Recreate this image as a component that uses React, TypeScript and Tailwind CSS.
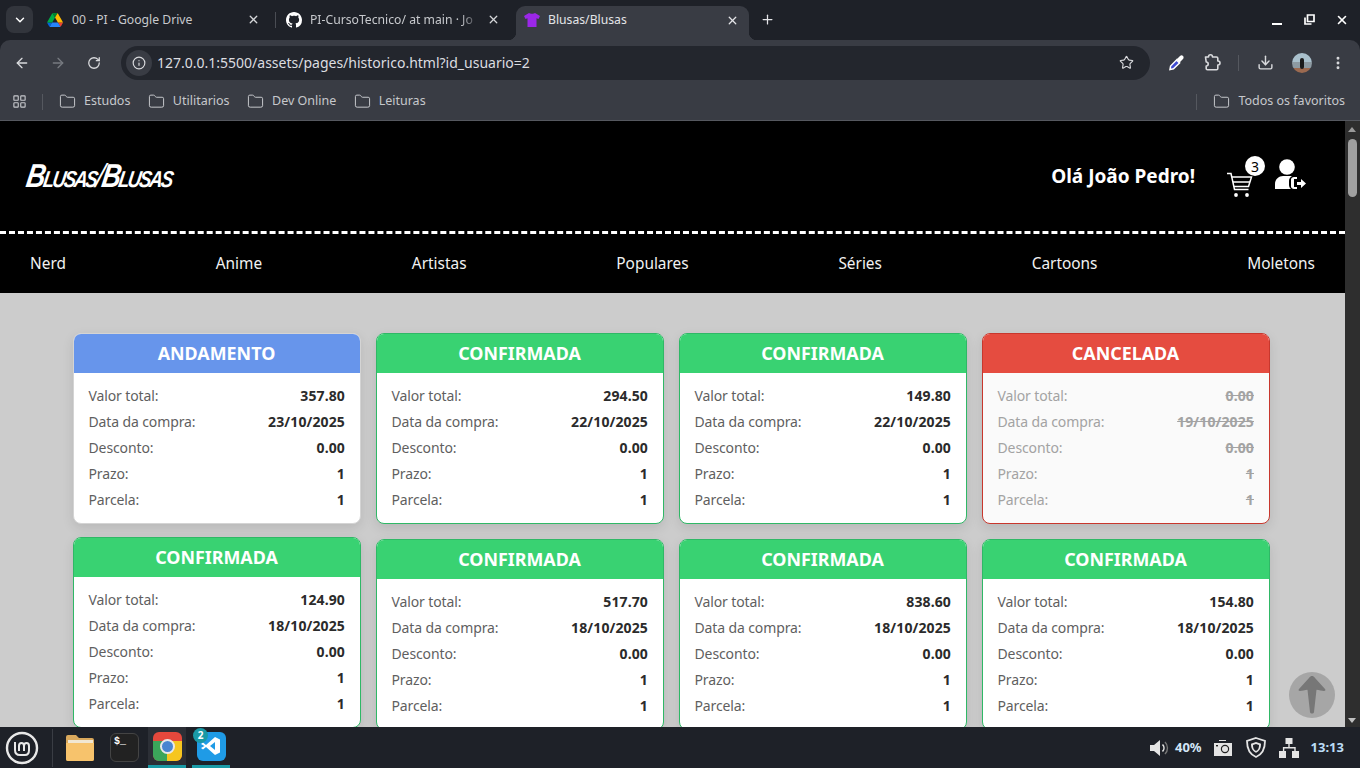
import React from "react";
import { ChevronDown, X, ArrowLeft, ArrowRight, RotateCw, Info, Star, Download, EllipsisVertical, Plus, LayoutGrid, Folder } from "lucide-react";

const font = "font-['Noto_Sans','Open_Sans',sans-serif]";

type Order = { s: "a" | "c" | "x"; v: string; d: string; off?: boolean };
const rows: Order[][] = [
  [
    { s: "a", v: "357.80", d: "23/10/2025" },
    { s: "c", v: "294.50", d: "22/10/2025" },
    { s: "c", v: "149.80", d: "22/10/2025" },
    { s: "x", v: "0.00", d: "19/10/2025" },
  ],
  [
    { s: "c", v: "124.90", d: "18/10/2025", off: true },
    { s: "c", v: "517.70", d: "18/10/2025" },
    { s: "c", v: "838.60", d: "18/10/2025" },
    { s: "c", v: "154.80", d: "18/10/2025" },
  ],
];

function Row({ l, v, x }: { l: string; v: string; x: boolean }) {
  return (
    <div className="flex justify-between h-[26px] items-center">
      <span className={`tracking-[-0.12px] ${x ? "text-[#a3a3a3]" : "text-[#5f5f5f]"}`}>{l}</span>
      <span className={`tracking-[0.12px] ${x ? "font-bold text-[#a3a3a3] line-through" : "font-bold text-[#2b2b2b]"}`}>{v}</span>
    </div>
  );
}

function Card({ o }: { o: Order }) {
  const x = o.s === "x";
  const border = o.s === "a" ? "border-[#d4d4d4]" : x ? "border-[#c8372d]" : "border-[#2fb866]";
  const head = o.s === "a" ? "bg-[#6795eb]" : x ? "bg-[#e54c40]" : "bg-[#39d272]";
  const label = o.s === "a" ? "ANDAMENTO" : x ? "CANCELADA" : "CONFIRMADA";
  return (
    <div className={`h-[191px] overflow-hidden rounded-[8px] border ${border} ${x ? "bg-[#fafafa]" : "bg-white"} shadow-[0_4px_12px_rgba(0,0,0,0.1)] ${o.off ? "-translate-y-[2px]" : ""}`}>
      <div className={`${head} h-[39px] flex items-center justify-center text-white font-bold text-[17.9px] pr-[1px]`}>{label}</div>
      <div className="pl-[14.5px] pr-[15px] pt-[9px] text-[14px]">
        <Row l="Valor total:" v={o.v} x={x} />
        <Row l="Data da compra:" v={o.d} x={x} />
        <Row l="Desconto:" v="0.00" x={x} />
        <Row l="Prazo:" v="1" x={x} />
        <Row l="Parcela:" v="1" x={x} />
      </div>
    </div>
  );
}

function Bm({ t }: { t: string }) {
  return (
    <div className="flex items-center gap-[8px] text-[12.5px] text-[#c6c8cc]">
      <Folder size={17} strokeWidth={1.4} />
      <span>{t}</span>
    </div>
  );
}

function Chrome() {
  return (
    <div className="bg-[#1e2128] shrink-0">
      <div className="h-[40px] flex items-center relative">
        <div className="ml-[6px] w-[27px] h-[27px] mt-[-1px] rounded-[8px] bg-[#32353c] flex items-center justify-center text-white"><ChevronDown size={14} strokeWidth={2.5} /></div>
        <div className="ml-[14px] flex items-center text-[12.2px] text-[#c7c9cd]">
          <svg width="16" height="14" viewBox="0 0 87 78"><path d="M6.6 66.9l3.9 6.7c.8 1.4 2 2.5 3.3 3.3L28 53H0c0 1.6.4 3.1 1.2 4.5z" fill="#0066da"/><path d="M43.7 25L30 1.2c-1.4.8-2.5 1.9-3.3 3.3L1.2 48.5C.4 49.9 0 51.4 0 53h28z" fill="#00ac47"/><path d="M73.6 76.9c1.3-.8 2.5-1.9 3.3-3.3l1.6-2.8 7.7-13.3c.8-1.4 1.2-2.9 1.2-4.5H59.8l5.9 11.7z" fill="#ea4335"/><path d="M43.7 25L57.4 1.2C56 .4 54.5 0 52.9 0H34.5c-1.6 0-3.1.5-4.5 1.2z" fill="#00832d"/><path d="M59.8 53H27.6L13.8 76.9c1.4.8 2.9 1.1 4.500 1.1h50.9c1.6 0 3.1-.5 4.5-1.2z" fill="#2684fc"/><path d="M73.4 26.5L60.7 4.5c-.8-1.4-2-2.5-3.3-3.3L43.7 25l16.1 28h27.5c0-1.6-.4-3.1-1.2-4.5z" fill="#ffba00"/></svg>
          <span className="ml-[9px] w-[175px]">00 - PI - Google Drive</span>
          <X size={13} strokeWidth={2.4} className="text-[#d5d6d9]" />
        </div>
        <div className="w-px h-[16px] bg-[#4a4d54] ml-[15px]" />
        <div className="ml-[10px] flex items-center text-[12.2px] text-[#c7c9cd]">
          <svg width="16" height="16" viewBox="0 0 16 16" fill="#fff"><path d="M8 0C3.58 0 0 3.58 0 8c0 3.54 2.29 6.53 5.47 7.59.4.07.55-.17.55-.38 0-.19-.01-.82-.01-1.49-2.01.37-2.53-.49-2.69-.94-.09-.23-.48-.94-.82-1.13-.28-.15-.68-.52-.01-.53.63-.01 1.08.58 1.23.82.72 1.21 1.87.87 2.33.66.07-.52.28-.87.51-1.07-1.78-.2-3.64-.89-3.64-3.95 0-.87.31-1.59.82-2.15-.08-.2-.36-1.02.08-2.12 0 0 .67-.21 2.2.82.64-.18 1.32-.27 2-.27s1.36.09 2 .27c1.53-1.04 2.2-.82 2.2-.82.44 1.1.16 1.92.08 2.12.51.56.82 1.27.82 2.15 0 3.07-1.87 3.75-3.65 3.95.29.25.54.73.54 1.48 0 1.07-.01 1.93-.01 2.2 0 .21.15.46.55.38A8.01 8.01 0 0016 8c0-4.42-3.58-8-8-8z"/></svg>
          <span className="ml-[8px] w-[177px] whitespace-nowrap [mask-image:linear-gradient(to_right,black_85%,transparent_96%)]">PI-CursoTecnico/ at main · Jo</span>
          <X size={13} strokeWidth={2.4} className="text-[#d5d6d9]" />
        </div>
        <div className="absolute left-[516px] top-[6px] w-[233px] h-[34px] rounded-t-[9px] bg-[#393c44] flex items-center pl-[8px] pb-[6px] text-[12.2px] text-[#e4e5e8]">
          <div className="absolute left-[-8px] bottom-0 w-[8px] h-[8px] bg-[radial-gradient(circle_at_0_0,transparent_8px,#393c44_8.5px)]" />
          <div className="absolute right-[-8px] bottom-0 w-[8px] h-[8px] bg-[radial-gradient(circle_at_100%_0,transparent_8px,#393c44_8.5px)]" />
          <svg width="16" height="16" viewBox="0 0 16 16" fill="#9b27e8"><path d="M5 1c1 1 5 1 6 0l5 3-1.500 3-2-.8V15H3.500V6.200l-2 .8L0 4z"/></svg>
          <span className="ml-[8px] w-[178px]">Blusas/Blusas</span>
          <X size={13} strokeWidth={2.4} className="text-[#e4e5e8]" />
        </div>
        <Plus size={15} strokeWidth={2} className="absolute left-[760px] top-[12px] text-[#e4e5e8]" />
        <div className="ml-auto mr-[11px] flex items-center text-white">
          <div className="w-[10px] h-[2px] bg-white mt-[8px]" />
          <svg className="ml-[22px] mt-[-2px]" width="11" height="11" viewBox="0 0 11 11" fill="none" stroke="#fff" strokeWidth="1.7"><path d="M3.500 1h6.500v6.500H3.500z"/><path d="M1 3.500v6.500h6.500" /></svg>
          <X size={14} strokeWidth={2.8} className="ml-[20px]" />
        </div>
      </div>
      <div className="bg-[#393c44] rounded-t-[10px] h-[45px] flex items-center text-[#d9dadd]">
        <ArrowLeft size={16} strokeWidth={2} className="ml-[14px]" />
        <ArrowRight size={16} strokeWidth={2} className="ml-[20px] text-[#777a80]" />
        <RotateCw size={14} strokeWidth={2.2} className="ml-[21px]" />
        <div className="ml-[20px] w-[1029px] h-[34px] rounded-full bg-[#23262d] flex items-center pl-[5px]">
          <div className="w-[26px] h-[26px] rounded-full bg-[#393c44] flex items-center justify-center"><Info size={14} strokeWidth={2} /></div>
          <span className="ml-[5px] text-[14px] text-[#dcdde0]">127.0.0.1:5500/assets/pages/historico.html?id_usuario=2</span>
          <Star size={15} strokeWidth={1.8} className="ml-auto mr-[16px]" />
        </div>
        <svg className="ml-[18px]" width="17" height="17" viewBox="0 0 17 17"><path d="M2 15.500l.6-3.500L8.500 6l3 3-6 5.800z" fill="#3f4bd1" stroke="#fff" strokeWidth="1.5"/><path d="M8 5l1.500-.5L12 2c1-1 2.300-.8 3-.1s.9 2 0 3l-2.500 2.500-.5 1.500z" fill="#fff"/></svg>
        <svg className="ml-[19px]" width="17" height="17" viewBox="0 0 17 17" fill="none" stroke="#d9dadd" strokeWidth="1.600" strokeLinejoin="round"><path d="M1.500 3h3c0-1.500 1-2.200 2-2.200S8.500 1.500 8.500 3h4c.8 0 1.300.5 1.300 1.300V7c1.500 0 2.200 1 2.200 2s-.7 2-2.200 2v3.500c0 .8-.5 1.300-1.300 1.300h-9c-.8 0-1.300-.5-1.300-1.300V12c1.500 0 2-1 2-2s-.5-2-2-2z"/></svg>
        <div className="w-px h-[16px] bg-[#55585f] ml-[17px]" />
        <Download size={17} strokeWidth={2} className="ml-[18px]" />
        <div className="ml-[18px] w-[20px] h-[20px] rounded-full overflow-hidden flex flex-col relative">
          <div className="h-[9px] bg-[#a9c0cc]" /><div className="h-[6px] bg-[#8d9aa2]" /><div className="h-[5px] bg-[#9c6a50]" />
          <div className="absolute left-[8px] top-[5px] w-[4px] h-[11px] rounded-sm bg-[#1b1b1b]" />
        </div>
        <EllipsisVertical size={16} strokeWidth={2.4} className="ml-[18px]" />
      </div>
      <div className="bg-[#393c44] h-[36px] flex items-center pb-[2px] border-b border-[#55585f]">
        <LayoutGrid size={15} strokeWidth={1.8} className="ml-[12px] text-[#c6c8cc]" />
        <div className="w-px h-[16px] bg-[#55585f] ml-[15px] mr-[16px]" />
        <div className="flex items-center gap-[17.4px]">
          <Bm t="Estudos" /><Bm t="Utilitarios" /><Bm t="Dev Online" /><Bm t="Leituras" />
        </div>
        <div className="ml-auto w-px h-[16px] bg-[#55585f] mr-[16px]" />
        <div className="mr-[15px]"><Bm t="Todos os favoritos" /></div>
      </div>
    </div>
  );
}

function Taskbar() {
  return (
    <div className="h-[41px] shrink-0 bg-[#1e2128] flex items-center relative">
      <svg className="ml-[5px]" width="34" height="34" viewBox="0 0 34 34" fill="none" stroke="#e8e8e8"><circle cx="17" cy="17" r="15" strokeWidth="2.4"/><path d="M10 11v8c0 3 2 5 5 5h5c3 0 4-2 4-5v-4c0-2-1-3-2.500-3S19 13 19 15v5M19 15c0-2-1-3-2.500-3S14 13 14 15v5" strokeWidth="2"/></svg>
      <div className="w-px h-[38px] bg-[#3a3d44] ml-[13px]" />
      <svg className="ml-[12px]" width="30" height="26" viewBox="0 0 30 26"><path d="M1 2a2 2 0 012-2h8l3 3h13a2 2 0 012 2v19a2 2 0 01-2 2H3a2 2 0 01-2-2z" fill="#d9a85c"/><rect x="3" y="5" width="25" height="3" fill="#f1e7d2"/><path d="M1 8h28v16a2 2 0 01-2 2H3a2 2 0 01-2-2z" fill="#f7c36c"/></svg>
      <div className="ml-[15px] w-[29px] h-[29px] rounded-[6px] bg-[#222] border border-[#444] text-[10px] leading-none text-white pl-[3px] pt-[3px] font-['Liberation_Mono',monospace] font-bold">$_</div>
      <div className="ml-[9px] w-[38px] h-[41px] bg-[#2c2f36] border-b-[3px] border-[#1a9aa6] flex items-center justify-center">
        <div className="w-[29px] h-[29px] rounded-[6px] overflow-hidden relative bg-[#e5483c]">
          <div className="absolute left-0 bottom-0 w-[15px] h-[20px] bg-[#3ba55a]" />
          <div className="absolute right-0 bottom-0 w-[15px] h-[20px] bg-[#f6c61f]" />
          <div className="absolute left-[7px] top-[7px] w-[15px] h-[15px] rounded-full bg-[#4a85d0] border-2 border-[#e8e8e8]" />
        </div>
      </div>
      <div className="ml-[6px] w-[38px] h-[41px] border-b-[3px] border-[#1a9aa6] flex items-center justify-center relative">
        <div className="w-[29px] h-[29px] rounded-[6px] bg-[#1f9be6] flex items-center justify-center">
          <svg width="20" height="20" viewBox="0 0 20 20"><path d="M14 1l5 2.500v13L14 19 5 11l-3 2.500L0 12l3.500-2L0 8l2-1.500L5 9zM14 6l-5 4 5 4z" fill="#fff"/></svg>
        </div>
        <div className="absolute left-[1px] top-[1px] w-[15px] h-[15px] rounded-full bg-[#1a9aa6] text-white text-[10px] font-bold flex items-center justify-center">2</div>
      </div>
      <div className={`ml-auto mr-[16px] flex items-center text-[13px] font-bold ${font}`}>
        <svg width="21" height="20" viewBox="0 0 21 20" fill="#e4e4e4"><path d="M1 7h4l6-5v16l-6-5H1z"/><path d="M13.500 6.500a5 5 0 010 7" stroke="#e4e4e4" strokeWidth="1.6" fill="none"/><path d="M16 4a8.500 8.500 0 010 12" stroke="#777" strokeWidth="1.4" fill="none"/></svg>
        <span className="ml-[5px] text-[#d3e6f7]">40%</span>
        <svg className="ml-[12px]" width="18" height="16" viewBox="0 0 18 16"><path d="M5 0h7v1H5zM0 3h18v13H0z" fill="#e4e4e4"/><circle cx="11" cy="9" r="3.600" fill="#e4e4e4" stroke="#222" strokeWidth="1.2"/><rect x="2" y="5" width="2" height="1.400" fill="#222"/></svg>
        <svg className="ml-[14px]" width="20" height="21" viewBox="0 0 20 21" fill="none" stroke="#e4e4e4"><path d="M10 1l9 3c0 7-2 13-9 16C3 17 1 11 1 4z" strokeWidth="1.8"/><path d="M10 5l5 1.700c0 4-1 7-5 9-4-2-5-5-5-9z" fill="#e4e4e4" strokeWidth="0"/><path d="M10 7l3 1c0 3-.7 4.700-3 6-2.300-1.300-3-3-3-6z" fill="#1e2128" strokeWidth="0"/></svg>
        <svg className="ml-[13px]" width="20" height="20" viewBox="0 0 20 20" fill="#e4e4e4"><rect x="6.500" y="0" width="7" height="6"/><rect x="0" y="13" width="7" height="7"/><rect x="13" y="13" width="7" height="7"/><path d="M9.300 6h1.400v3h6v4h-1.400v-2.600h-10V13H3.900V9h5.400z"/></svg>
        <span className="ml-[12px] text-[#bcdcf6]">13:13</span>
      </div>
    </div>
  );
}

export default function App() {
  return (
    <div className={`h-screen w-full overflow-hidden flex flex-col ${font}`}>
      <Chrome />
      <div className="flex-1 min-h-0 flex">
        <div className="flex-1 min-w-0 bg-[#cccccc] flex flex-col relative overflow-hidden">
          <div className="bg-black text-white h-[172px] shrink-0">
            <div className="h-[113px] flex items-center pl-[27px] pr-[38px] border-b-[3.5px] border-dashed border-white">
              <span className="text-[33px] leading-none font-bold italic -skew-x-12 tracking-[-2.4px] scale-x-[0.8] origin-left mt-[-2px] [font-variant:small-caps] font-['Liberation_Sans',sans-serif] w-[150px] whitespace-nowrap">Blusas<span className="font-normal">/</span>Blusas</span>
              <span className="ml-auto font-bold text-[19px] mr-[32px]">Olá João Pedro!</span>
              <div className="relative mt-[18px] w-[26px] h-[26px]">
                <svg width="26" height="26" viewBox="0 0 26 26" fill="none" stroke="#fff" strokeWidth="1.500"><path d="M0 1.500h4l3.500 16h14"/><path d="M5 5h19.500l-3 9.500H7"/><path d="M6 10h17"/><circle cx="9" cy="23" r="1.900" fill="#fff" stroke="none"/><circle cx="20" cy="23" r="1.900" fill="#fff" stroke="none"/></svg>
                <div className="absolute left-[18px] top-[-16px] w-[20px] h-[20px] rounded-full bg-white text-black text-[14px] flex items-center justify-center">3</div>
              </div>
              <svg className="ml-[22px] mt-[-2px]" width="32" height="32" viewBox="0 0 32 32" fill="#fff"><circle cx="12" cy="8" r="7.800"/><path d="M0 30v-5c0-5 4-8 8-8h9c-2 1-3 3-3 5v4c0 2 1 3 2 4z"/><path d="M19 18h3v2h-3v8h3v2h-3c-1.500 0-3-1-3-2.500v-7c0-1.500 1.500-2.500 3-2.500z"/><path d="M22 23h4v-3l5 4.500-5 4.500v-3h-4z"/></svg>
            </div>
            <div className="h-[59px] flex items-center justify-between pl-[30px] pr-[30px] pt-[1px] text-[15.4px] text-[#f2f2f2]">
              {["Nerd", "Anime", "Artistas", "Populares", "Séries", "Cartoons", "Moletons"].map((t) => <span key={t}>{t}</span>)}
            </div>
          </div>
          <div className="pt-[40px] pl-[73px] pr-[75px] grid grid-cols-4 gap-[15px]">
            {rows.flat().map((o, i) => <Card key={i} o={o} />)}
          </div>
          <div className="absolute left-[1289px] top-[551px] w-[46px] h-[46px] rounded-full bg-[#a6a6a6] flex items-center justify-center">
            <svg width="30" height="40" viewBox="0 0 30 40" fill="#777777"><path d="M15 1c1 0 2 .6 3 2l10 11c.8 1 .4 2-1 2-2 0-5-1-7.500-1.200L17 37c-.3 2-3.700 2-4 0L10.500 14.800C8 15 5 16 3 16c-1.400 0-1.800-1-1-2L12 3c1-1.400 2-2 3-2z" /></svg>
          </div>
        </div>
        <div className="w-[15px] bg-[#2e2e2e] relative shrink-0">
          <div className="absolute left-[3px] top-[18px] w-[9px] h-[58px] rounded-full bg-[#a0a0a0]" />
          <div className="absolute left-[3px] top-[6px] border-x-[4.500px] border-x-transparent border-b-[5px] border-b-[#9a9a9a]" />
          <div className="absolute left-[3px] bottom-[4px] border-x-[4.500px] border-x-transparent border-t-[5px] border-t-[#c0c0c0]" />
        </div>
      </div>
      <Taskbar />
    </div>
  );
}
